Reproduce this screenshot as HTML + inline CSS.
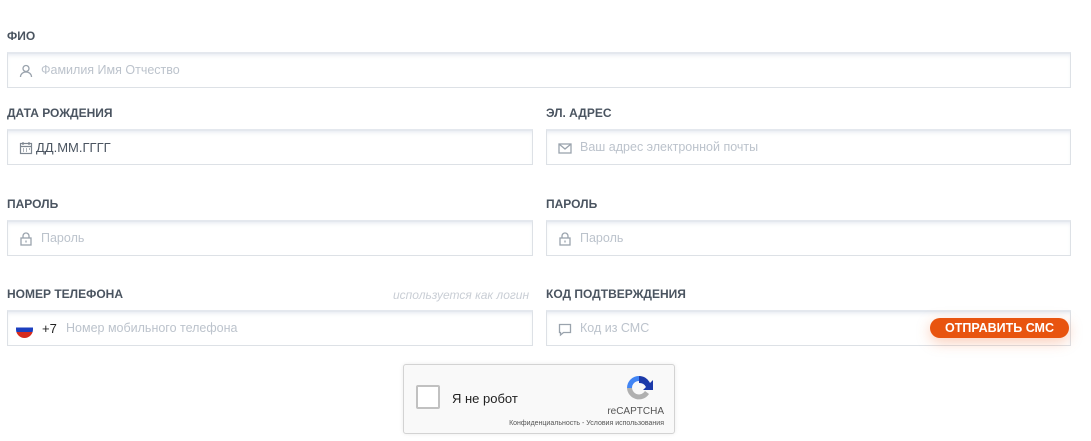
<!DOCTYPE html>
<html><head><meta charset="utf-8"><style>
*{box-sizing:border-box;margin:0;padding:0}
body{width:1091px;height:441px;background:#fff;font-family:"Liberation Sans",Arial,sans-serif;position:relative;overflow:hidden}
.lbl{position:absolute;font-size:12px;font-weight:bold;color:#4a5460}
.box{position:absolute;height:36px;border:1px solid #dde1e6;border-top:2px solid #e4e8ee;background:#fff;box-shadow:inset 0 3px 4px -2px rgba(200,210,225,.5)}
.ph{position:absolute;top:9px;font-size:12.5px;color:#bcc3cc}
.ic{position:absolute;top:9px;left:10px;width:16px;height:16px}
</style></head><body>
<div class="lbl" style="left:7px;top:29px">ФИО</div>
<div class="box" style="left:7px;top:52px;width:1064px">
<svg class="ic" viewBox="0 0 16 16" fill="none" stroke="#9aa3ad" stroke-width="1.3"><circle cx="8" cy="5.5" r="3"/><path d="M2.5 14c0-3 2.5-5 5.5-5s5.5 2 5.5 5"/></svg>
<span class="ph" style="left:33px">Фамилия Имя Отчество</span></div>

<div class="lbl" style="left:7px;top:106px">ДАТА РОЖДЕНИЯ</div>
<div class="box" style="left:7px;top:129px;width:526px">
<svg class="ic" viewBox="0 0 16 16" fill="none" stroke="#7d8690" stroke-width="1.2"><rect x="2.5" y="3.5" width="11" height="10"/><path d="M2.5 6.5h11M5 2v3M11 2v3M5 9h1M8 9h1M11 9h1M5 11h1M8 11h1"/></svg>
<span class="ph" style="left:28px;color:#4a5460;font-size:13px">ДД.ММ.ГГГГ</span></div>

<div class="lbl" style="left:546px;top:106px">ЭЛ. АДРЕС</div>
<div class="box" style="left:546px;top:129px;width:525px">
<svg class="ic" viewBox="0 0 16 16" fill="none" stroke="#9aa3ad" stroke-width="1.3"><rect x="2" y="4" width="12" height="9"/><path d="M2 4l6 5 6-5"/></svg>
<span class="ph" style="left:33px">Ваш адрес электронной почты</span></div>

<div class="lbl" style="left:7px;top:197px">ПАРОЛЬ</div>
<div class="box" style="left:7px;top:220px;width:526px">
<svg class="ic" viewBox="0 0 16 16" fill="none" stroke="#9aa3ad" stroke-width="1.3"><rect x="3" y="7" width="10" height="7"/><path d="M5 7V5a3 3 0 016 0v2M8 9.5v2"/></svg>
<span class="ph" style="left:33px">Пароль</span></div>

<div class="lbl" style="left:546px;top:197px">ПАРОЛЬ</div>
<div class="box" style="left:546px;top:220px;width:525px">
<svg class="ic" viewBox="0 0 16 16" fill="none" stroke="#9aa3ad" stroke-width="1.3"><rect x="3" y="7" width="10" height="7"/><path d="M5 7V5a3 3 0 016 0v2M8 9.5v2"/></svg>
<span class="ph" style="left:33px">Пароль</span></div>

<div class="lbl" style="left:7px;top:287px">НОМЕР ТЕЛЕФОНА</div>
<div style="position:absolute;left:393px;top:288px;font-size:12px;font-style:italic;color:#c9ced5">используется как логин</div>
<div class="box" style="left:7px;top:310px;width:526px">
<div style="position:absolute;left:8px;top:10px;width:17px;height:16px;border-radius:0 0 9px 9px;overflow:hidden;background:linear-gradient(#fff 0 33%,#1c3fbf 33% 62%,#d52b1e 62%)"></div>
<span class="ph" style="left:34px;color:#222;font-size:13px">+7</span>
<span class="ph" style="left:58px">Номер мобильного телефона</span></div>

<div class="lbl" style="left:546px;top:287px">КОД ПОДТВЕРЖДЕНИЯ</div>
<div class="box" style="left:546px;top:310px;width:525px">
<svg class="ic" viewBox="0 0 16 16" fill="none" stroke="#9aa3ad" stroke-width="1.3"><path d="M2.5 3.5h11v8h-7l-3 2.5v-2.5h-1z"/></svg>
<span class="ph" style="left:33px">Код из СМС</span></div>
<div style="position:absolute;left:930px;top:318px;width:139px;height:20px;border-radius:10px;background:#e8540f;color:#fff;font-size:12.5px;font-weight:bold;text-align:center;line-height:20px;box-shadow:0 4px 14px rgba(240,110,50,.35)">ОТПРАВИТЬ СМС</div>

<div style="position:absolute;left:403px;top:364px;width:272px;height:70px;background:#f9f9f9;border:1px solid #d3d3d3;border-radius:3px;box-shadow:0 0 4px rgba(0,0,0,.08)">
<div style="position:absolute;left:12px;top:20px;width:24px;height:24px;background:#fff;border:2px solid #c1c1c1;border-radius:2px"></div>
<div style="position:absolute;left:48px;top:26px;font-size:13px;color:#222">Я не робот</div>
<svg style="position:absolute;left:220px;top:8px" width="30" height="30" viewBox="0 0 30 30"><path d="M15 3a12 12 0 0111 7l3-3v10h-10l3-3a7 7 0 00-7-4z" fill="#1c3aa9"/><path d="M15 3A12 12 0 003 15h5a7 7 0 017-7z" fill="#4285f4"/><path d="M3 15a12 12 0 0022 6l-4-3a7 7 0 01-13-3z" fill="#b0b0b0"/></svg>
<div style="position:absolute;right:10px;top:41px;font-size:10px;color:#555">reCAPTCHA</div>
<div style="position:absolute;right:10px;top:55px;font-size:7px;color:#555">Конфиденциальность - Условия использования</div>
</div>
</body></html>
